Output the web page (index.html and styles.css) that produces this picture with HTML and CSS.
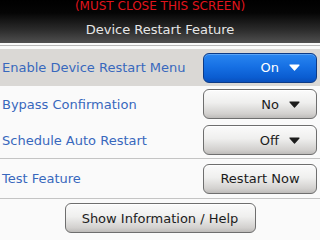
FILE: index.html
```html
<!DOCTYPE html>
<html>
<head>
<meta charset="utf-8">
<link rel="stylesheet" href="styles.css">
</head>
<body>
<div class="screen">
  <header class="hdr">
    <div class="warn">(MUST CLOSE THIS SCREEN)</div>
    <div class="title">Device Restart Feature</div>
  </header>
  <div class="sep"></div>
  <div class="row sel">
    <span class="lbl">Enable Device Restart Menu</span>
    <div class="btn blue"><span class="val">On</span><svg class="tri" width="11" height="7" viewBox="0 0 11 7"><polygon points="1,1 10,1 5.5,6" fill="currentColor" stroke="currentColor" stroke-width="1.2" stroke-linejoin="round"/></svg></div>
  </div>
  <div class="row">
    <span class="lbl">Bypass Confirmation</span>
    <div class="btn"><span class="val">No</span><svg class="tri" width="11" height="7" viewBox="0 0 11 7"><polygon points="1,1 10,1 5.5,6" fill="currentColor" stroke="currentColor" stroke-width="1.2" stroke-linejoin="round"/></svg></div>
  </div>
  <div class="row">
    <span class="lbl">Schedule Auto Restart</span>
    <div class="btn"><span class="val">Off</span><svg class="tri" width="11" height="7" viewBox="0 0 11 7"><polygon points="1,1 10,1 5.5,6" fill="currentColor" stroke="currentColor" stroke-width="1.2" stroke-linejoin="round"/></svg></div>
  </div>
  <div class="line"></div>
  <div class="row tall">
    <span class="lbl">Test Feature</span>
    <div class="btn center">Restart Now</div>
  </div>
  <div class="line"></div>
  <div class="foot">
    <div class="btn wide center">Show Information / Help</div>
  </div>
</div>
</body>
</html>
```
FILE: styles.css
```css
html, body {
  margin: 0;
  padding: 0;
  background: #fafafa;
}
.screen {
  width: 320px;
  height: 240px;
  overflow: hidden;
  font-family: "DejaVu Sans", sans-serif;
  background: #fafafa;
}
.hdr {
  height: 43px;
  background: linear-gradient(#000 0%, #050505 30%, #2c2c2c 70%, #505050 100%);
  display: flex;
  flex-direction: column;
  align-items: center;
}
.warn {
  color: #e0141c;
  font-size: 12px;
  line-height: 13px;
}
.title {
  color: #e6e6e6;
  font-size: 13px;
  line-height: 16px;
  margin-top: 9px;
}
.sep {
  height: 6px;
  background: linear-gradient(#fafafa 0, #fafafa 2px, #b8b8b8 2px, #b8b8b8 3px, #fafafa 3px, #fafafa 6px);
}
.row {
  height: 36px;
  display: flex;
  align-items: center;
  justify-content: space-between;
  padding: 0 3px 0 2px;
}
.row.sel {
  height: 37px;
  background: #dad8d5;
}
.row.tall {
  height: 39px;
}
.lbl {
  color: #3868bd;
  font-size: 13px;
}
.line {
  height: 1px;
  background: #c4c4c4;
}
.btn {
  box-sizing: border-box;
  width: 114px;
  height: 30px;
  border: 1px solid #6e6e6e;
  border-radius: 6px;
  background: linear-gradient(#fbfbfb 0%, #efefee 45%, #d2d0ce 85%, #bdbbb9 100%);
  color: #1c1c1c;
  font-size: 13px;
  display: flex;
  align-items: center;
  justify-content: flex-end;
  padding-right: 16px;
  gap: 10px;
  box-shadow: inset 0 1px 0 #ffffff;
}
.btn.blue {
  background: linear-gradient(#2a86f0 0%, #1670e4 45%, #0a5cd0 85%, #0a4fbb 100%);
  border-color: #0c3a86;
  color: #ffffff;
  box-shadow: inset 0 1px 0 #5aa4f6;
}
.btn.center {
  justify-content: center;
  padding: 0;
}
.tri {
  display: block;
}
.foot {
  display: flex;
  justify-content: center;
  padding-top: 4px;
}
.btn.wide {
  width: 191px;
  height: 30px;
}
```
